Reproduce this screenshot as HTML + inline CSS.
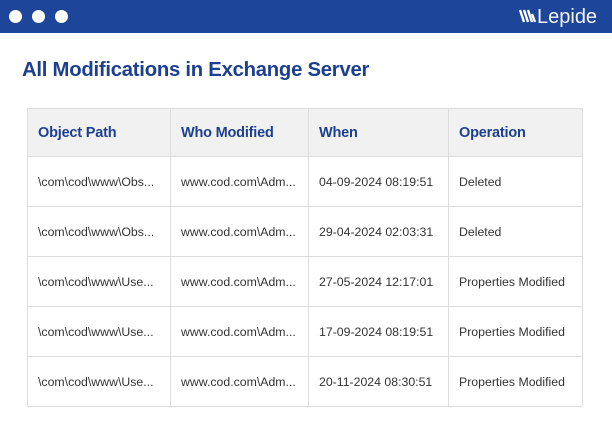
<!DOCTYPE html>
<html><head><meta charset="utf-8"><style>
*{margin:0;padding:0;box-sizing:border-box}
body{width:612px;height:430px;background:#fff;font-family:"Liberation Sans",sans-serif;position:relative;overflow:hidden}
.bar{position:absolute;left:0;top:0;width:612px;height:33px;background:#1d4599}
.dot{position:absolute;top:10px;width:13px;height:13px;border-radius:50%;background:#fff}
.logo{position:absolute;left:537px;top:6px;color:#f2f4fa;font-size:20px;letter-spacing:0px;line-height:22px}
h1{position:absolute;left:22px;top:59px;font-size:20.3px;color:#1d3f92;font-weight:bold;letter-spacing:-0.25px}
table{position:absolute;left:27px;top:108px;border-collapse:collapse;width:555px;table-layout:fixed}
td,th{border:1px solid #dcdcdc;height:50px;padding:0 0 0 10px;text-align:left;font-size:12.3px;color:#333;white-space:nowrap;overflow:hidden}
th{background:#f1f1f1;color:#1d3f92;font-size:14.5px;font-weight:bold;height:48px;letter-spacing:-0.2px}
</style></head><body>
<div class="bar">
<div class="dot" style="left:9px"></div><div class="dot" style="left:32px"></div><div class="dot" style="left:55px"></div>
<svg style="position:absolute;left:519px;top:9px" width="17" height="14" viewBox="0 0 17 14"><g stroke="#fff" stroke-width="2.4"><line x1="1" y1="1" x2="5" y2="13"/><line x1="5" y1="1" x2="9" y2="13"/><line x1="9" y1="1" x2="13" y2="13"/><line x1="13" y1="5" x2="16" y2="13"/></g></svg>
<div class="logo">Lepide</div>
</div>
<h1>All Modifications in Exchange Server</h1>
<table>
<colgroup><col style="width:143px"><col style="width:138px"><col style="width:140px"><col style="width:134px"></colgroup>
<tr><th>Object Path</th><th>Who Modified</th><th>When</th><th>Operation</th></tr>
<tr><td>\com\cod\www\Obs...</td><td>www.cod.com\Adm...</td><td>04-09-2024 08:19:51</td><td>Deleted</td></tr>
<tr><td>\com\cod\www\Obs...</td><td>www.cod.com\Adm...</td><td>29-04-2024 02:03:31</td><td>Deleted</td></tr>
<tr><td>\com\cod\www\Use...</td><td>www.cod.com\Adm...</td><td>27-05-2024 12:17:01</td><td>Properties Modified</td></tr>
<tr><td>\com\cod\www\Use...</td><td>www.cod.com\Adm...</td><td>17-09-2024 08:19:51</td><td>Properties Modified</td></tr>
<tr><td>\com\cod\www\Use...</td><td>www.cod.com\Adm...</td><td>20-11-2024 08:30:51</td><td>Properties Modified</td></tr>
</table>
</body></html>
